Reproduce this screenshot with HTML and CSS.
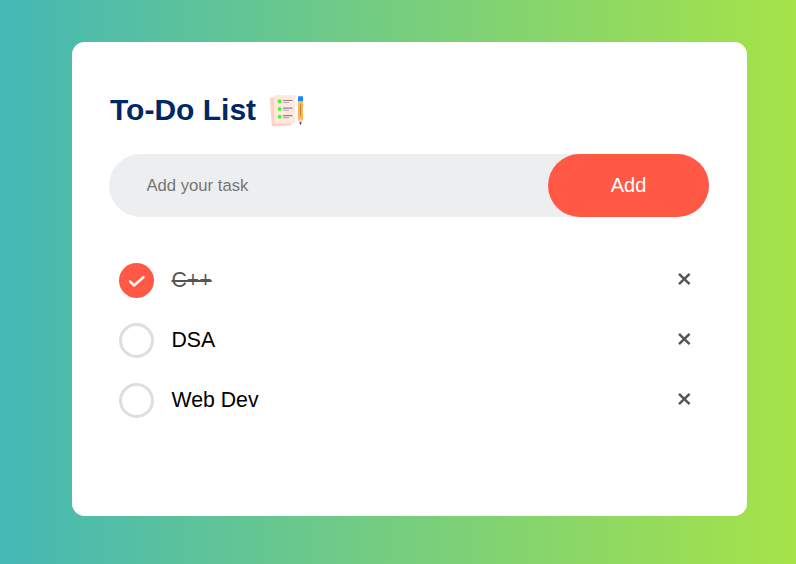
FILE: index.html
```html
<!DOCTYPE html>
<html lang="en">
<head>
<meta charset="utf-8">
<title>To-Do List</title>
<link rel="stylesheet" href="styles.css">
</head>
<body>
<main class="card">
  <h1 class="title">To-Do List
    <svg class="title-icon" viewBox="0 0 38 36" aria-hidden="true">
      <path fill="#ffd0c3" d="M2.5 3.8 L8 3.2 L10 28 L24 29.5 Q24 31.3 22.5 31.4 L5.2 32.4 Q3.9 32.4 3.8 31 L2 5.2 Q1.9 4 2.5 3.8Z"/>
      <rect x="6.2" y="1.2" width="21" height="28.2" rx="1.4" fill="#ffe8dd"/>
      <g fill="#3cff34"><circle cx="11.6" cy="7.3" r="2"/><circle cx="11.6" cy="15" r="2"/><circle cx="11.6" cy="22.7" r="2"/></g>
      <path stroke="#957e9d" stroke-width="1.2" d="M15 6.5h9.5M15 14.1h9.500M15 21.6h9.5"/>
      <path stroke="#b7a4b5" stroke-width="1.1" d="M15 8.5h6M15 16.2h6M15 23.6h6"/>
      <path fill="#ffb54d" d="M30 6h5v20h-5z"/>
      <path fill="#1687ff" d="M30 2.8q0-.5.5-.5h4q.5 0 .5.5V7h-5z"/>
      <path stroke="#b58248" stroke-width="1" d="M32.5 10.500v11"/>
      <path fill="#ffc6c6" d="M30 25.5h5l-1.3 3.5h-2.4z"/>
      <path fill="#33243f" d="M31.3 28.5h2.4l-1.2 2.6z"/>
    </svg>
  </h1>
  <form class="row">
    <input class="task-input" type="text" placeholder="Add your task">
    <button class="add" type="button">Add</button>
  </form>
  <ul class="list">
    <li class="item done">
      <svg class="check" viewBox="0 0 35 35" aria-hidden="true"><circle cx="17.5" cy="17.5" r="17.5" fill="#ff5945"/><path d="M11 18.4l4 4.1 9.4-8.300" fill="none" stroke="#ffede8" stroke-width="2.6" stroke-linecap="round" stroke-linejoin="round"/></svg>
      <span class="label">C++</span><svg class="remove" viewBox="0 0 26 24"><path d="M8 6.8l10.600 10.400M18.600 6.8l-10.600 10.400"/></svg>
    </li>
    <li class="item"><span class="check ring"></span><span class="label">DSA</span><svg class="remove" viewBox="0 0 26 24"><path d="M8 6.8l10.600 10.400M18.600 6.8l-10.600 10.400"/></svg></li>
    <li class="item"><span class="check ring"></span><span class="label">Web Dev</span><svg class="remove" viewBox="0 0 26 24"><path d="M8 6.8l10.600 10.400M18.600 6.8l-10.600 10.400"/></svg></li>
  </ul>
</main>
</body>
</html>
```
FILE: styles.css
```css
* { box-sizing: border-box; margin: 0; padding: 0; }
body {
  min-height: 564px;
  padding: 42px 49px 48px 72px;
  font-family: "Liberation Sans", Arial, sans-serif;
  background: linear-gradient(90deg, #45b8b6, #a6e348);
}
.card {
  height: 474px;
  padding: 50px 38px 0 37px;
  border-radius: 12.5px;
  background: #fff;
}
.title {
  display: flex;
  align-items: center;
  height: 36px;
  margin: 0 0 26px 1px;
  color: #002765;
  font-size: 30px;
  line-height: 36px;
}
.title-icon { width: 38px; height: 36px; margin: 3px 0 0 12px; }
.row {
  display: flex;
  height: 63px;
  border-radius: 38px;
  background: #edeef0;
}
.task-input {
  flex: 1;
  min-width: 0;
  padding-left: 37.5px;
  border: 0;
  outline: 0;
  background: transparent;
  font: 16.67px "Liberation Sans", Arial, sans-serif;
}
.task-input::placeholder { color: #757575; }
.add {
  width: 161px;
  border: 0;
  border-radius: 50px;
  background: #ff5945;
  color: #fff;
  font: 20px "Liberation Sans", Arial, sans-serif;
}
.list { margin-top: 33px; padding: 0 12px 0 10px; list-style: none; }
.item { display: flex; align-items: center; height: 60px; font-size: 21.25px; }
.check { flex: none; width: 35px; height: 35px; margin-right: 17.5px; }
.ring { border: 3px solid #dedede; border-radius: 50%; }
.label { flex: 1; line-height: 24px; margin-top: -1px; }
.done .label { color: #555; text-decoration: line-through; }
.remove {
  width: 26px;
  height: 24px;
  margin-top: -3px;
  fill: none;
  stroke: #555;
  stroke-width: 2.5;
}
```
